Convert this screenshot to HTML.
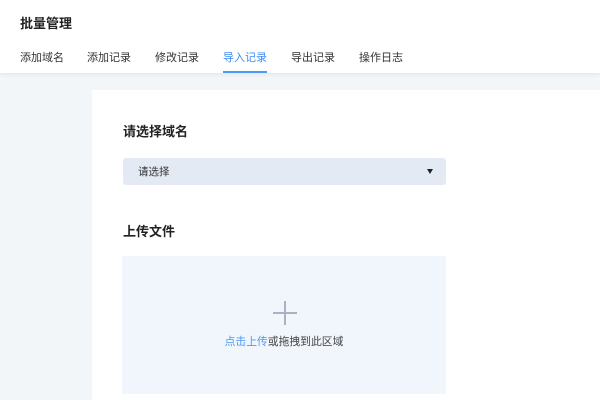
<!DOCTYPE html>
<html><head><meta charset="utf-8"><style>
*{margin:0;padding:0;box-sizing:border-box}
body{width:600px;height:400px;overflow:hidden;background:#f3f6f9;font-family:"Liberation Sans","Noto Sans CJK SC",sans-serif;position:relative}
.hdr{position:absolute;left:0;top:0;width:600px;height:73px;background:#fff;box-shadow:0 2px 4px rgba(0,0,0,0.06)}
.t{position:absolute;left:20px;top:13px;font-size:13px;font-weight:bold;color:#222}
.tab{position:absolute;top:49px;font-size:11px;color:#333}
.tab.on{color:#3d8ef5}
.ul{position:absolute;left:223px;top:71px;width:44px;height:2px;background:#4a9bf7}
.card{position:absolute;left:92px;top:90px;width:508px;height:310px;background:#fff}
.h{position:absolute;left:123px;font-size:13px;font-weight:bold;color:#222}
.sel{position:absolute;left:123px;top:158px;width:323px;height:27px;background:#e4eaf4;border-radius:3px;font-size:10.5px;color:#333;padding:6px 0 0 15px}
.arr{position:absolute;right:13px;top:11px;width:0;height:0;border-left:3.5px solid transparent;border-right:3.5px solid transparent;border-top:5px solid #222}
.up{position:absolute;left:122px;top:256px;width:324px;height:138px;background:#f1f5fc}
.ph{position:absolute;left:273px;top:312px;width:24px;height:1.5px;background:#a9b1c2}
.pv{position:absolute;left:284px;top:301px;width:1.5px;height:24px;background:#a9b1c2}
.ut{position:absolute;left:0;width:568px;top:333px;text-align:center;font-size:10.8px;color:#444}
</style></head><body>
<div class="hdr">
<div class="t">批量管理</div>
<div class="tab" style="left:20px">添加域名</div>
<div class="tab" style="left:87px">添加记录</div>
<div class="tab" style="left:155px">修改记录</div>
<div class="tab on" style="left:223px">导入记录</div>
<div class="tab" style="left:291px">导出记录</div>
<div class="tab" style="left:359px">操作日志</div>
<div class="ul"></div>
</div>
<div class="card"></div>
<div class="h" style="top:121px">请选择域名</div>
<div class="sel">请选择<div class="arr"></div></div>
<div class="h" style="top:221px">上传文件</div>
<div class="up"></div>
<div class="ph"></div><div class="pv"></div>
<div class="ut"><span style="color:#4a9bf7">点击上传</span>或拖拽到此区域</div>
</body></html>
